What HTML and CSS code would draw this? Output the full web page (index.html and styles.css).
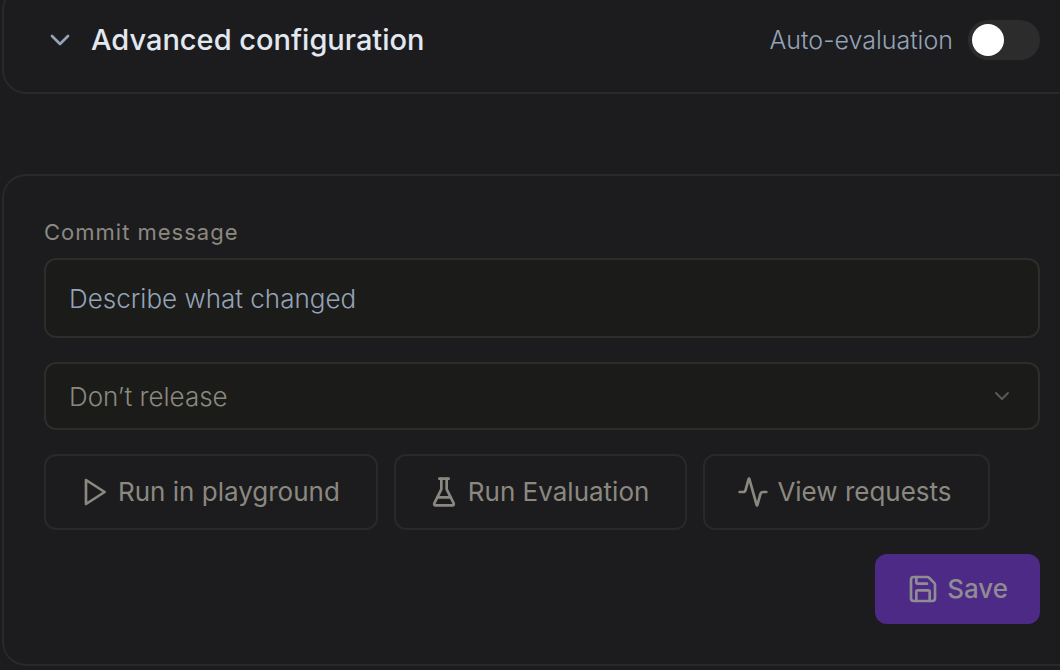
FILE: index.html
```
<!DOCTYPE html>
<html lang="en">
<head>
    <meta charset="UTF-8">
    <meta name="viewport" content="width=device-width, initial-scale=1.0">
    <title>Prompt settings</title>
    <link rel="stylesheet" href="styles.css">
</head>
<body>
    <main>
        <section class="panel config">
            <button class="config-toggle" type="button" aria-expanded="false">
                <svg class="icon" viewBox="0 0 24 24"><path d="m6 9 6 6 6-6"/></svg>
                Advanced configuration
            </button>
            <label class="auto-eval">
                Auto-evaluation
                <input class="switch" type="checkbox" role="switch">
            </label>
        </section>

        <form class="panel commit">
            <label class="field-label" for="message">Commit message</label>
            <input class="field message" id="message" type="text" placeholder="Describe what changed">

            <div class="select-wrap">
                <select class="field release" aria-label="Release">
                    <option>Don’t release</option>
                    <option>Release</option>
                </select>
                <svg class="icon select-arrow" viewBox="0 0 24 24"><path d="m6 9 6 6 6-6"/></svg>
            </div>

            <div class="actions">
                <button class="btn" type="button">
                    <svg class="icon" viewBox="0 0 24 24"><path d="M6 3l14 9-14 9z"/></svg>
                    Run in playground
                </button>
                <button class="btn" type="button">
                    <svg class="icon" viewBox="0 0 24 24">
                        <path d="M10 2v7.527a2 2 0 0 1-.211.896L4.72 20.55a1 1 0 0 0 .9 1.45h12.76a1 1 0 0 0 .9-1.45l-5.069-10.127A2 2 0 0 1 14 9.527V2"/>
                        <path d="M8.5 2h7M7 16h10"/>
                    </svg>
                    Run Evaluation
                </button>
                <button class="btn" type="button">
                    <svg class="icon" viewBox="0 0 24 24"><path d="M22 12h-2.48a2 2 0 0 0-1.93 1.46l-2.35 8.36a.25.25 0 0 1-.48 0L9.24 2.18a.25.25 0 0 0-.48 0l-2.35 8.36A2 2 0 0 1 4.49 12H2"/></svg>
                    View requests
                </button>
            </div>

            <button class="btn save" type="submit">
                <svg class="icon" viewBox="0 0 24 24">
                    <path d="M15.2 3a2 2 0 0 1 1.4.6l3.8 3.8a2 2 0 0 1 .6 1.4V19a2 2 0 0 1-2 2H5a2 2 0 0 1-2-2V5a2 2 0 0 1 2-2z"/>
                    <path d="M17 21v-7a1 1 0 0 0-1-1H8a1 1 0 0 0-1 1v7M7 3v4a1 1 0 0 0 1 1h7"/>
                </svg>
                Save
            </button>
        </form>
    </main>
</body>
</html>
```

FILE: styles.css
```
:root {
    --bg: #1c1c1e;
    --line: #29292b;
    --field-bg: #1b1b19;
    --field-line: #2d2d29;
    --muted: #8b8880;
    --slate: #94a3b8;
}

* {
    box-sizing: border-box;
}

body {
    margin: 0;
    background-color: var(--bg);
    color: var(--muted);
    font-family: Inter, "Open Sans", sans-serif;
    font-size: 26px;
    overflow: hidden;
}

button,
input,
select {
    font: inherit;
    color: inherit;
}

main {
    display: flex;
    flex-direction: column;
    gap: 80px;
    padding-left: 2px;
}

.panel {
    border: 2px solid var(--line);
    border-right: none;
    border-radius: 24px 0 0 24px;
}

.icon {
    width: 32px;
    height: 32px;
    flex-shrink: 0;
    fill: none;
    stroke: currentColor;
    stroke-width: 2;
    stroke-linecap: round;
    stroke-linejoin: round;
}

/* the top of this panel is scrolled out of view */
.config {
    display: flex;
    justify-content: space-between;
    align-items: center;
    margin-top: -14px;
    padding: 32px 20px 32px 40px;
}

.config-toggle {
    display: flex;
    align-items: center;
    gap: 15px;
    padding: 0;
    border: none;
    background: none;
    color: #e2e8f0;
    font-size: 29px;
    font-weight: 500;
    line-height: 40px;
    cursor: pointer;
}

.config-toggle .icon {
    color: var(--slate);
}

.auto-eval {
    display: flex;
    align-items: center;
    gap: 15px;
    color: var(--slate);
    font-size: 25px;
    font-weight: 300;
    line-height: 40px;
}

.switch {
    appearance: none;
    width: 72px;
    height: 40px;
    margin: 0;
    padding: 4px;
    border-radius: 20px;
    background-color: #2c2c2c;
    cursor: pointer;
}

.switch::before {
    content: '';
    display: block;
    width: 32px;
    height: 32px;
    border-radius: 50%;
    background-color: white;
}

.switch:checked::before {
    margin-left: auto;
}

.commit {
    display: flex;
    flex-direction: column;
    gap: 24px;
    padding: 40px 20px 40px 40px;
}

.field-label {
    margin-bottom: -14px;
    font-size: 22px;
    line-height: 32px;
    letter-spacing: 1px;
}

.field {
    width: 100%;
    padding: 0 23px;
    border: 2px solid var(--field-line);
    border-radius: 12px;
    background-color: var(--field-bg);
    font-weight: 300;
}

.message {
    height: 80px;
}

.message::placeholder {
    color: var(--slate);
    opacity: 1;
}

.select-wrap {
    position: relative;
    display: flex;
}

.release {
    appearance: none;
    height: 68px;
}

.select-arrow {
    position: absolute;
    top: 22px;
    right: 26px;
    width: 24px;
    height: 24px;
    color: #5a5955;
    pointer-events: none;
}

.actions {
    display: flex;
    gap: 16px;
}

.btn {
    display: flex;
    align-items: center;
    gap: 8px;
    height: 76px;
    padding: 0 36px 2px 32px;
    border: 2px solid var(--line);
    border-radius: 12px;
    background: none;
    white-space: nowrap;
    cursor: pointer;
}

.btn .icon {
    margin-top: 2px;
}

.save {
    align-self: flex-end;
    height: 70px;
    padding: 0 32px 2px;
    border: none;
    background-color: #4c2a85;
    color: #8f8c93;
    font-weight: 500;
}
```
